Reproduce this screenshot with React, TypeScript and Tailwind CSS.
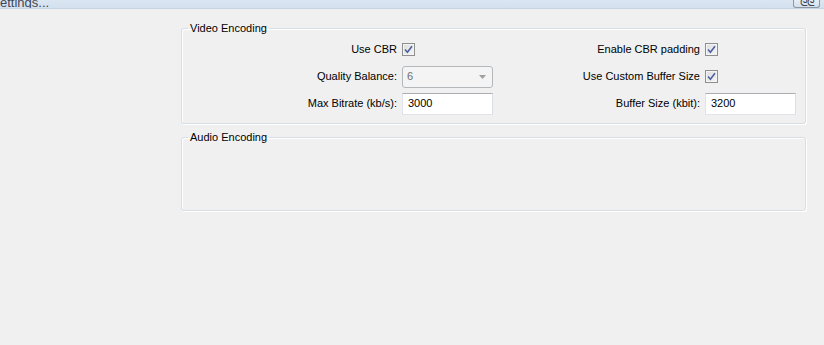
import React from 'react';

const font = { fontFamily: '"Liberation Sans", Arial, sans-serif' };

function CheckBox() {
  return (
    <span className="flex h-[13px] w-[13px] items-center justify-center border border-[#8f8f8f] bg-gradient-to-br from-[#dcdcdc] to-[#f6f6f6] shadow-[inset_0_0_0_1px_#f4f4f4]">
      <svg viewBox="0 0 9 9" className="h-[9px] w-[9px]">
        <path d="M1 4.5 L3.4 7.2 L8 1.2" fill="none" stroke="#4c61a0" strokeWidth={1.6} />
      </svg>
    </span>
  );
}

function TextBox({ value }: { value: string }) {
  return (
    <div className="flex h-[22px] w-[91px] items-center border border-[#e2e3ea] border-t-[#abadb3] border-r-[#dbdfe6] bg-white px-[5px] text-[11px] text-black">
      {value}
    </div>
  );
}

function ComboBox({ value }: { value: string }) {
  return (
    <div className="flex h-[22px] w-[91px] items-center justify-between rounded-[3px] border border-[#b5b8bb] bg-[#f4f4f4] pl-[4px] pr-[6px] text-[11px] text-[#6d6d6d]">
      <span>{value}</span>
      <svg viewBox="0 0 7 4" className="h-[4px] w-[7px]">
        <path d="M0 0 H7 L3.5 4 Z" fill="#a0a0a0" />
      </svg>
    </div>
  );
}

function Row({ label, children }: { label: string; children: React.ReactNode }) {
  return (
    <>
      <div className="flex h-[27px] items-center justify-end pr-[5px]">{label}</div>
      <div className="flex h-[27px] items-center">{children}</div>
    </>
  );
}

function GroupBox({ title, className, children }: { title: string; className?: string; children?: React.ReactNode }) {
  return (
    <fieldset
      className={`rounded-[3px] border border-[#d5dfe5] shadow-[inset_1px_1px_0_#ffffff,1px_1px_0_#ffffff] ${className ?? ''}`}
    >
      <legend className="ml-[6px] px-[2px] text-[11px] leading-[14px] text-black">{title}</legend>
      {children}
    </fieldset>
  );
}

export default function App() {
  return (
    <div className="flex h-[345px] w-[824px] flex-col overflow-hidden bg-[#f0f0f0] text-[11px] text-black" style={font}>
      {/* title bar, cut off at the top */}
      <div className="flex h-[9px] shrink-0 items-end justify-between overflow-hidden border-b border-[#c5d3e2] bg-gradient-to-b from-[#dbe6f3] to-[#d3e0ee]">
        <span className="-mb-[2px] text-[13px] leading-[14px] text-[#3c4654]">ettings...</span>
        <div className="mr-[4px] flex h-[8px] w-[27px] items-end justify-center overflow-hidden rounded-b-[3px] border border-t-0 border-[#8d96a3] bg-gradient-to-b from-[#e6edf6] to-[#d4dfec]">
          <span className="-mb-[1px] text-[11px] leading-[12px] tracking-[-1px] text-[#3c4654]">ᘓᘓ</span>
        </div>
      </div>

      <div className="ml-[181px] mr-[18px] mt-[12px] flex flex-col gap-[6px]">
        <GroupBox title="Video Encoding" className="pb-[6px]">
          <div className="grid grid-cols-[212px_91px_212px_91px] pl-[8px] pt-[1px]">
            <Row label="Use CBR">
              <CheckBox />
            </Row>
            <Row label="Enable CBR padding">
              <CheckBox />
            </Row>
            <Row label="Quality Balance:">
              <ComboBox value="6" />
            </Row>
            <Row label="Use Custom Buffer Size">
              <CheckBox />
            </Row>
            <Row label="Max Bitrate (kb/s):">
              <TextBox value="3000" />
            </Row>
            <Row label="Buffer Size (kbit):">
              <TextBox value="3200" />
            </Row>
          </div>
        </GroupBox>
        <GroupBox title="Audio Encoding" className="h-[81px]" />
      </div>
    </div>
  );
}
